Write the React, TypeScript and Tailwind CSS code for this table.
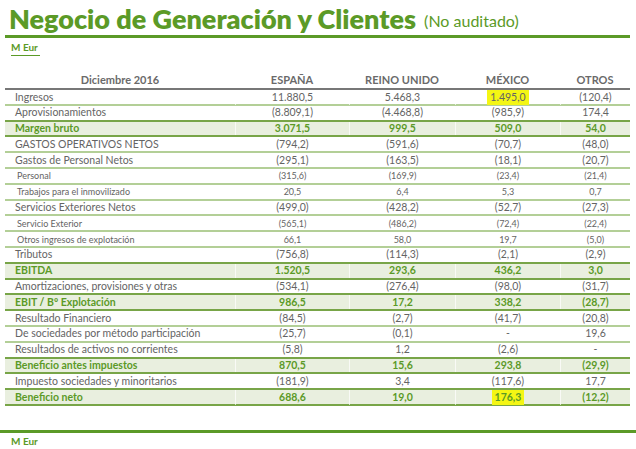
import React from "react";

type Row = {
  label: string;
  values: string[];
  kind?: "total" | "sub";
  mark?: number; // index of the highlighted value
};

const ROWS: Row[] = [
  { label: "Ingresos", values: ["11.880,5", "5.468,3", "1.495,0", "(120,4)"], mark: 2 },
  { label: "Aprovisionamientos", values: ["(8.809,1)", "(4.468,8)", "(985,9)", "174,4"] },
  { label: "Margen bruto", values: ["3.071,5", "999,5", "509,0", "54,0"], kind: "total" },
  { label: "GASTOS OPERATIVOS NETOS", values: ["(794,2)", "(591,6)", "(70,7)", "(48,0)"] },
  { label: "Gastos de Personal Netos", values: ["(295,1)", "(163,5)", "(18,1)", "(20,7)"] },
  { label: "Personal", values: ["(315,6)", "(169,9)", "(23,4)", "(21,4)"], kind: "sub" },
  { label: "Trabajos para el inmovilizado", values: ["20,5", "6,4", "5,3", "0,7"], kind: "sub" },
  { label: "Servicios Exteriores Netos", values: ["(499,0)", "(428,2)", "(52,7)", "(27,3)"] },
  { label: "Servicio Exterior", values: ["(565,1)", "(486,2)", "(72,4)", "(22,4)"], kind: "sub" },
  { label: "Otros ingresos de explotación", values: ["66,1", "58,0", "19,7", "(5,0)"], kind: "sub" },
  { label: "Tributos", values: ["(756,8)", "(114,3)", "(2,1)", "(2,9)"] },
  { label: "EBITDA", values: ["1.520,5", "293,6", "436,2", "3,0"], kind: "total" },
  { label: "Amortizaciones, provisiones y otras", values: ["(534,1)", "(276,4)", "(98,0)", "(31,7)"] },
  { label: "EBIT / Bº Explotación", values: ["986,5", "17,2", "338,2", "(28,7)"], kind: "total" },
  { label: "Resultado Financiero", values: ["(84,5)", "(2,7)", "(41,7)", "(20,8)"] },
  { label: "De sociedades por método participación", values: ["(25,7)", "(0,1)", "-", "19,6"] },
  { label: "Resultados de activos no corrientes", values: ["(5,8)", "1,2", "(2,6)", "-"] },
  { label: "Beneficio antes impuestos", values: ["870,5", "15,6", "293,8", "(29,9)"], kind: "total" },
  { label: "Impuesto sociedades y minoritarios", values: ["(181,9)", "3,4", "(117,6)", "17,7"] },
  { label: "Beneficio neto", values: ["688,6", "19,0", "176,3", "(12,2)"], kind: "total", mark: 2 },
];

const COLS = ["ESPAÑA", "REINO UNIDO", "MÉXICO", "OTROS"];

export default function App() {
  return (
    <div className="w-[636px] h-[449px] bg-white overflow-hidden font-['Lato','Liberation_Sans',sans-serif] text-[#646464]">
      <div className="pl-[9px] h-[35px] flex items-end gap-[8px] text-[#5b9a27] whitespace-nowrap">
        <span className="text-[27px] font-extrabold leading-[32px]">Negocio de Generación y Clientes</span>
        <span className="text-[16px] leading-[24px] mb-[2px]">(No auditado)</span>
      </div>
      <div className="ml-[5px] mr-[6px] h-[3px] bg-[#5b9a27]" />
      <MEur />

      <div className="ml-[5px] w-[625px] mt-[16px]">
        <div className="grid grid-cols-[230px_114px_106px_105px_70px] h-[19px] items-center border-b-[2px] border-[#777] text-[11px] font-bold text-[#6a6a6a] leading-[14px]">
          <div className="text-center">Diciembre 2016</div>
          {COLS.map((c) => (
            <div key={c} className="text-center">
              {c}
            </div>
          ))}
        </div>
        {ROWS.map((r, i) => (
          <TableRow key={i} row={r} next={ROWS[i + 1]} />
        ))}
      </div>

      <div className="mt-[24px] h-[3px] bg-[#5b9a27]" />
      <MEur />
    </div>
  );
}

function MEur() {
  return (
    <div className="h-[17px] pl-[11px] flex items-center">
      <span className="text-[10px] font-bold text-[#5b9a27] leading-[11px] border-b border-[#5b9a27] pb-[2px] pr-[2px] mt-[4px]">
        M Eur
      </span>
    </div>
  );
}

function TableRow({ row, next }: { row: Row; next?: Row }) {
  const total = row.kind === "total";
  const sub = row.kind === "sub";
  const darkLine = total || next?.kind === "total";
  return (
    <div
      className={`grid grid-cols-[230px_114px_106px_105px_70px] h-[15.8px] items-center border-b-2 whitespace-nowrap ${
        darkLine ? "border-[#78a548]" : "border-[#b3cf97]"
      } ${total ? "bg-[#e9efdf] text-[#5b9a27] font-bold" : ""} ${sub ? "text-[9px]" : "text-[10.5px]"}`}
    >
      <div className={`${sub ? "pl-[12px]" : "pl-[10px]"} leading-[13px]`}>{row.label}</div>
      {row.values.map((v, j) => (
        <div key={j} className="text-center leading-[13px] border-l border-white/70 h-full flex items-center justify-center">
          {row.mark === j ? <span className="bg-[#f4f614] px-[3px] py-[1px]">{v}</span> : v}
        </div>
      ))}
    </div>
  );
}
